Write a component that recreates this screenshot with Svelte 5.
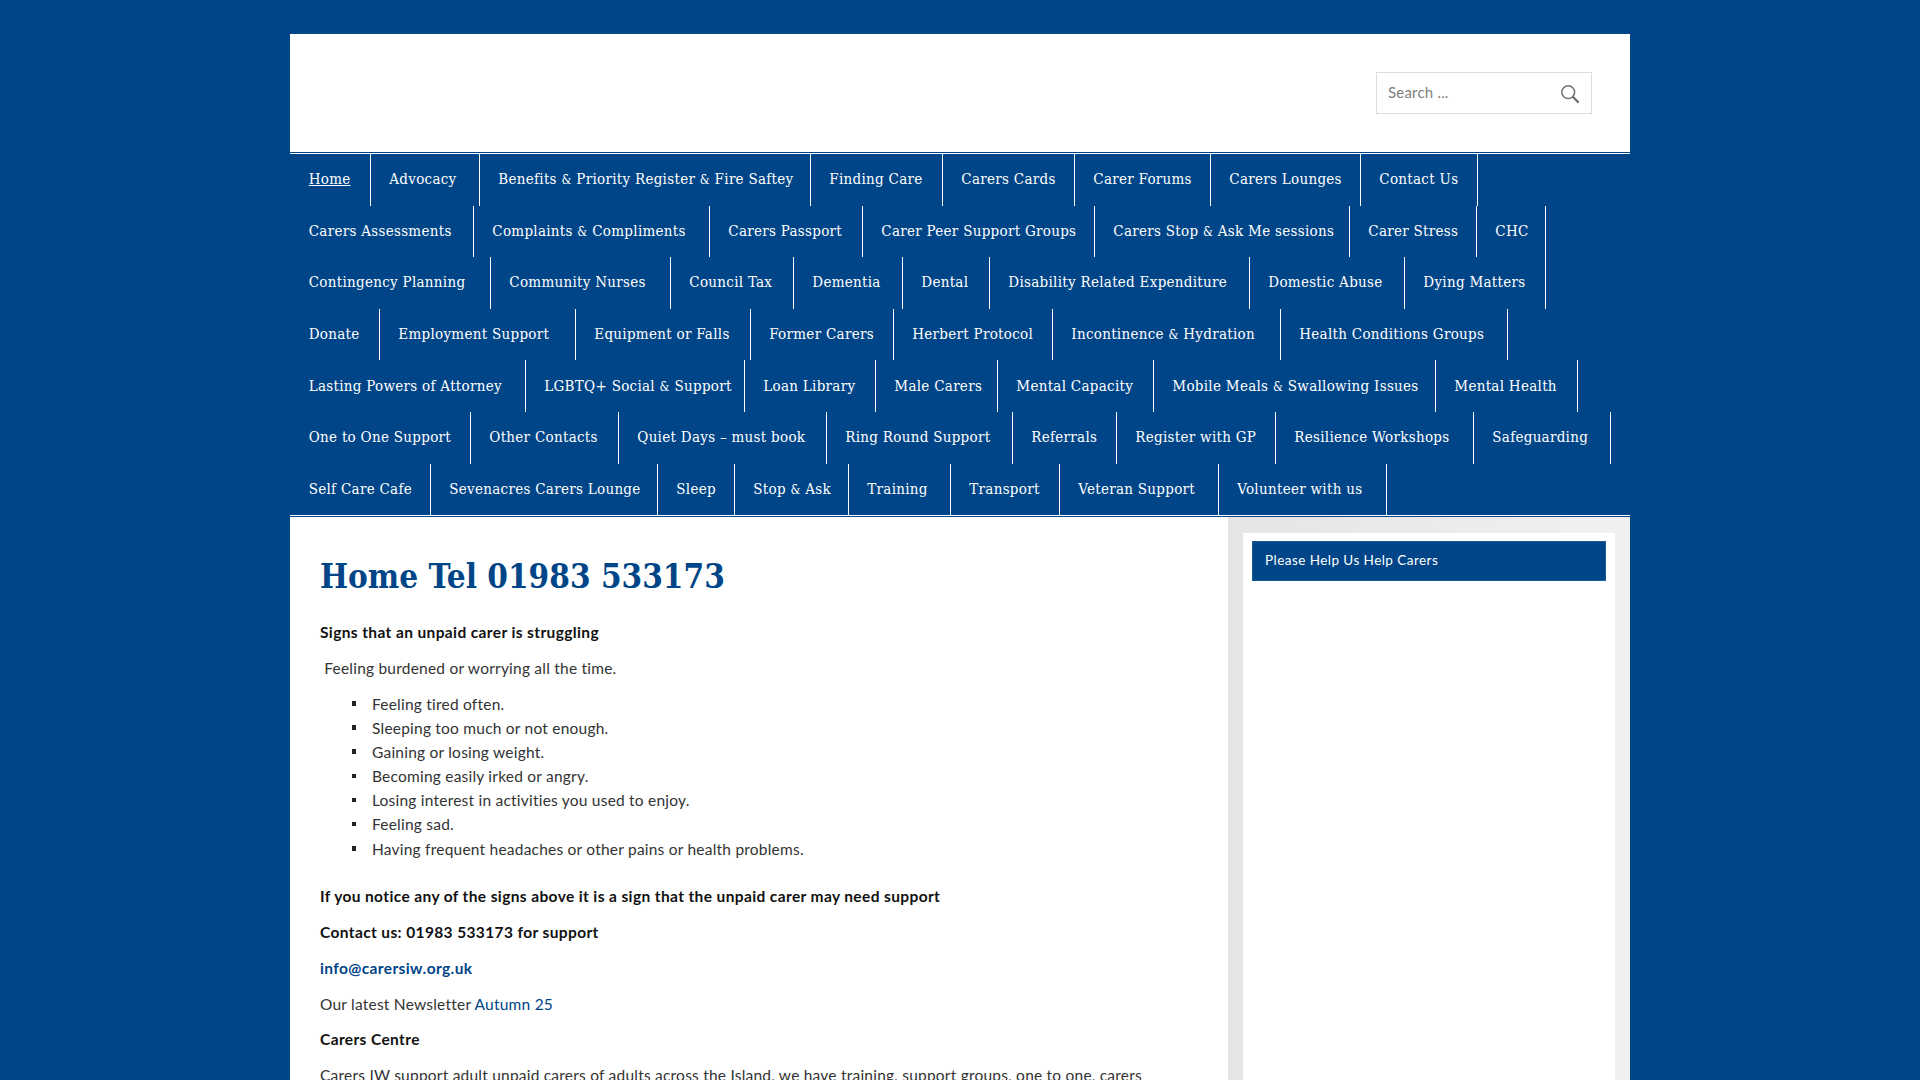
<script>
  const rows = [
    [['Home',80],['Advocacy',189],['Benefits & Priority Register & Fire Saftey',520],['Finding Care',652],['Carers Cards',784],['Carer Forums',920],['Carers Lounges',1070],['Contact Us',1187]],
    [['Carers Assessments',183],['Complaints & Compliments',419],['Carers Passport',572],['Carer Peer Support Groups',804],['Carers Stop & Ask Me sessions',1059],['Carer Stress',1186],['CHC',1255]],
    [['Contingency Planning',200],['Community Nurses',380],['Council Tax',503],['Dementia',612],['Dental',699],['Disability Related Expenditure',959],['Domestic Abuse',1114],['Dying Matters',1255]],
    [['Donate',89],['Employment Support',285],['Equipment or Falls',460],['Former Carers',603],['Herbert Protocol',762],['Incontinence & Hydration',990],['Health Conditions Groups',1217]],
    [['Lasting Powers of Attorney',235],['LGBTQ+ Social & Support',454],['Loan Library',585],['Male Carers',707],['Mental Capacity',863],['Mobile Meals & Swallowing Issues',1145],['Mental Health',1287]],
    [['One to One Support',180],['Other Contacts',328],['Quiet Days – must book',536],['Ring Round Support',722],['Referrals',826],['Register with GP',985],['Resilience Workshops',1183],['Safeguarding',1320]],
    [['Self Care Cafe',140],['Sevenacres Carers Lounge',367],['Sleep',444],['Stop & Ask',558],['Training',660],['Transport',769],['Veteran Support',928],['Volunteer with us',1096]]
  ];
  const items = rows.flatMap((r) => r.map(([label, end], i) => ({ parts: label.split('&'), width: i === 0 ? end + 0.6 : end - r[i - 1][1] })));
  const signs = ['Feeling tired often.','Sleeping too much or not enough.','Gaining or losing weight.','Becoming easily irked or angry.','Losing interest in activities you used to enjoy.','Feeling sad.','Having frequent headaches or other pains or health problems.'];
</script>

<div class="page">
  <div class="wrap">
    <header class="head">
      <form class="search" onsubmit={(e) => e.preventDefault()}>
        <input type="text" placeholder="Search ..." aria-label="Search" />
        <svg viewBox="0 0 20 20" width="20" height="20" aria-hidden="true">
          <circle cx="8.2" cy="8.2" r="6.4" fill="none" stroke="#707070" stroke-width="1.5" />
          <path d="M12.8 12.8 L18.6 18.6" stroke="#707070" stroke-width="2.3" fill="none" />
        </svg>
      </form>
    </header>
    <nav class="nav">
      <ul>
        {#each items as it, i}
          <li style="width:{it.width}px"><a href="#top" class:current={i === 0}>{#each it.parts as part, j}{#if j > 0}<span class="amp">&amp;</span>{/if}{part}{/each}</a></li>
        {/each}
      </ul>
    </nav>
    <div class="body">
      <main class="main">
        <h1>Home Tel 01983 533173</h1>
        <p><strong>Signs that an unpaid carer is struggling</strong></p>
        <p>&nbsp;Feeling burdened or worrying all the time.</p>
        <ul class="list">
          {#each signs as s}<li>{s}</li>{/each}
        </ul>
        <p><strong>If you notice any of the signs above it is a sign that the unpaid carer may need support</strong></p>
        <p><strong>Contact us: 01983 533173 for support</strong></p>
        <p><a href="#top"><strong>info@carersiw.org.uk</strong></a></p>
        <p>Our latest Newsletter <a href="#top">Autumn 25</a></p>
        <p><strong>Carers Centre</strong></p>
        <p>Carers IW support adult unpaid carers of adults across the Island, we have training, support groups, one to one, carers</p>
      </main>
      <aside class="side">
        <section class="card">
          <h3>Please Help Us Help Carers</h3>
        </section>
      </aside>
    </div>
  </div>
</div>

<style>
  :global(body) {
    margin: 0;
    background: #004587;
  }
  .page {
    height: 100vh;
    overflow: hidden;
    padding-top: 34px;
    box-sizing: border-box;
  }
  .wrap {
    width: 1340px;
    margin: 0 auto;
    background: #fff;
    font-family: Lato, "Open Sans", sans-serif;
    font-size: 15.5px;
    letter-spacing: 0.22px;
    line-height: 24.1px;
    color: #333;
  }
  .head {
    height: 118px;
    box-sizing: border-box;
    display: flex;
    justify-content: flex-end;
    align-items: flex-start;
    padding: 38px 38px 0 0;
  }
  .search {
    width: 216px;
    height: 42px;
    box-sizing: border-box;
    border: 1px solid #ddd;
    display: flex;
    align-items: center;
    padding: 0 11px;
  }
  .search input {
    flex: 1;
    min-width: 0;
    border: 0;
    outline: 0;
    padding: 0;
    background: none;
    font: 15px Lato, sans-serif;
    letter-spacing: 0.2px;
    color: #333;
    margin-top: -3px;
  }
  .search input::placeholder {
    color: #808080;
    opacity: 1;
  }
  .search svg {
    flex: none;
    margin-top: 2px;
  }
  .nav {
    background: #004587;
    padding: 2px 0;
    position: relative;
  }
  .nav::before,
  .nav::after {
    content: '';
    position: absolute;
    left: 0;
    right: 0;
    height: 1px;
    background: #fff;
  }
  .nav::before { top: 1px; }
  .nav::after { bottom: 1px; }
  .nav ul {
    list-style: none;
    margin: 0;
    padding: 0;
    display: flex;
    flex-wrap: wrap;
  }
  .nav li {
    height: 51.6px;
    box-sizing: border-box;
    border-right: 1px solid #fff;
    padding: 0 0 1px 18.7px;
    white-space: nowrap;
    overflow: hidden;
    display: flex;
    align-items: center;
  }
  .nav a {
    color: #fff;
    text-decoration: none;
    font-family: "DejaVu Serif Condensed", "DejaVu Serif", serif;
    font-size: 15px;
    line-height: 24px;
    letter-spacing: 0.29px;
  }
  .nav a.current {
    text-decoration: underline;
  }
  .amp {
    font-size: 12.5px;
    line-height: 1;
  }
  .body {
    display: flex;
    align-items: stretch;
  }
  .main {
    width: 938px;
    box-sizing: border-box;
    padding: 36px 30px 0;
    height: 700px;
  }
  h1 {
    margin: 0 0 19px;
    font-family: "DejaVu Serif Condensed", "DejaVu Serif", serif;
    font-weight: 700;
    font-size: 33px;
    letter-spacing: 0;
    line-height: 48px;
    color: #004587;
  }
  p {
    margin: 0 0 11.65px;
  }
  strong {
    color: #111;
    font-weight: 700;
    letter-spacing: 0.38px;
  }
  a {
    color: #004587;
    text-decoration: none;
  }
  a strong {
    color: #004587;
  }
  .list {
    margin: 0 0 23.6px;
    padding: 0 0 0 52px;
    list-style: none;
  }
  .list li {
    position: relative;
    line-height: 24.17px;
  }
  .list li::before {
    content: '';
    position: absolute;
    left: -20.4px;
    top: 9.5px;
    width: 4.4px;
    height: 4.4px;
    background: #222;
  }
  .side {
    width: 402px;
    box-sizing: border-box;
    padding: 16px 15px 0;
    background: linear-gradient(to right, #e5e5e5, #f1f1f1);
  }
  .card {
    height: 100%;
    background: #fff;
    padding: 8px 9px;
    box-sizing: border-box;
  }
  h3 {
    margin: 0;
    height: 40px;
    box-sizing: border-box;
    background: #004587;
    border: 1px solid #1a5a96;
    color: #fff;
    font-weight: 400;
    font-size: 13.5px;
    letter-spacing: 0.45px;
    line-height: 37px;
    padding-left: 12px;
  }
</style>
